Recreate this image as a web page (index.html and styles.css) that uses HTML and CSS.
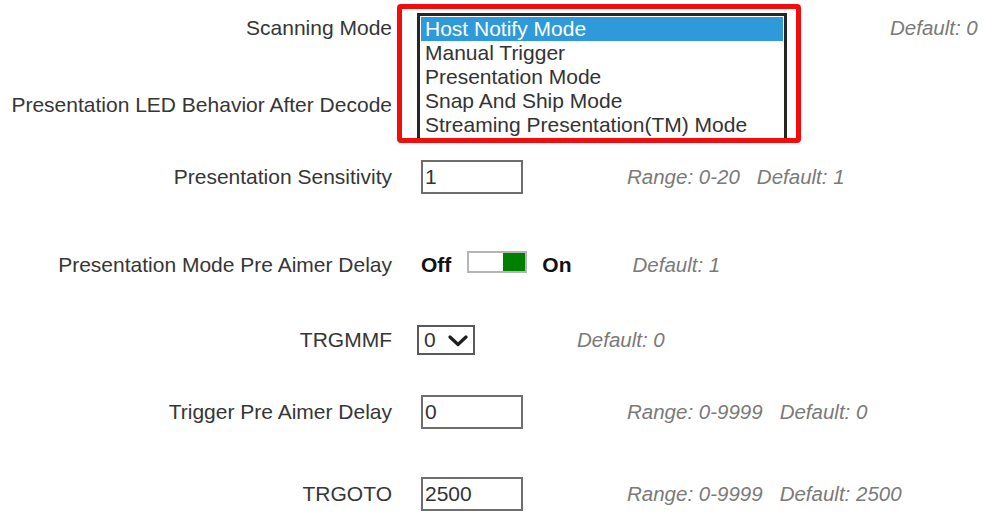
FILE: index.html
```html
<!DOCTYPE html>
<html>
<head>
<meta charset="utf-8">
<title>Scanning settings</title>
<link rel="stylesheet" href="styles.css">
</head>
<body>
<div class="form">
  <div class="row">
    <div class="label">Scanning Mode</div>
    <div class="ctrl ctrl-wide">
      <div class="select-closed"></div>
      <div class="listbox">
        <div class="opt selected">Host Notify Mode</div>
        <div class="opt">Manual Trigger</div>
        <div class="opt">Presentation Mode</div>
        <div class="opt">Snap And Ship Mode</div>
        <div class="opt">Streaming Presentation(TM) Mode</div>
      </div>
      <div class="highlight"></div>
    </div>
    <div class="note note-far">Default: 0</div>
  </div>

  <div class="row">
    <div class="label">Presentation LED Behavior After Decode</div>
    <div class="ctrl ctrl-wide"><div class="select-closed"></div></div>
  </div>

  <div class="row">
    <div class="label">Presentation Sensitivity</div>
    <div class="ctrl ctrl-input"><input class="text" type="text" value="1"></div>
    <div class="note note-input"><span>Range: 0-20</span><span class="def">Default: 1</span></div>
  </div>

  <div class="row">
    <div class="label">Presentation Mode Pre Aimer Delay</div>
    <div class="ctrl ctrl-input switch">
      <span class="sw-label">Off</span>
      <span class="toggle"><span class="knob"></span></span>
      <span class="sw-label">On</span>
    </div>
    <div class="note note-switch">Default: 1</div>
  </div>

  <div class="row">
    <div class="label">TRGMMF</div>
    <div class="ctrl ctrl-select">
      <div class="dropdown">
        <span class="dd-value">0</span>
        <svg class="chev" width="20" height="12" viewBox="0 0 20 12"><polyline points="2,2 10,9.5 18,2" fill="none" stroke="#1e1e1e" stroke-width="3.2" stroke-linecap="round" stroke-linejoin="round"/></svg>
      </div>
    </div>
    <div class="note note-select">Default: 0</div>
  </div>

  <div class="row">
    <div class="label">Trigger Pre Aimer Delay</div>
    <div class="ctrl ctrl-input"><input class="text" type="text" value="0"></div>
    <div class="note note-input"><span>Range: 0-9999</span><span class="def">Default: 0</span></div>
  </div>

  <div class="row">
    <div class="label">TRGOTO</div>
    <div class="ctrl ctrl-input"><input class="text" type="text" value="2500"></div>
    <div class="note note-input"><span>Range: 0-9999</span><span class="def">Default: 2500</span></div>
  </div>
</div>
</body>
</html>
```

FILE: styles.css
```css
html, body {
  margin: 0;
  padding: 0;
  background: #ffffff;
  overflow: hidden;
}

body {
  font-family: "Liberation Sans", Arial, sans-serif;
  font-size: 21px;
  color: #333333;
}

.form {
  display: grid;
  grid-template-rows: 77px 72px 88px 75px 72px 82px 40px;
  padding-top: 8px;
}

.row {
  display: flex;
  align-items: center;
  height: 40px;
}

.label {
  width: 392px;
  flex-shrink: 0;
  text-align: right;
  white-space: nowrap;
  color: #363636;
}

.ctrl {
  flex-shrink: 0;
  display: flex;
  align-items: center;
}

.ctrl-wide {
  position: relative;
  margin-left: 25px;
  width: 370px;
  height: 40px;
}

.ctrl-input {
  margin-left: 29px;
}

.ctrl-select {
  margin-left: 25px;
}

.select-closed {
  width: 100%;
  height: 30px;
  box-sizing: border-box;
  border: 2px solid #555555;
}

/* open dropdown list lying over the rows below */
.listbox {
  position: absolute;
  top: 5px;
  left: 0;
  width: 370px;
  height: 128px;
  box-sizing: border-box;
  border: 3px solid #262626;
  padding: 1px;
  background: #ffffff;
  z-index: 2;
}

.opt {
  height: 24px;
  line-height: 24px;
  padding: 0 4px;
  white-space: nowrap;
  color: #333333;
}

.opt.selected {
  background: #2e9ad9;
  color: #ffffff;
}

/* red annotation frame */
.highlight {
  position: absolute;
  top: -4px;
  left: -20px;
  width: 404px;
  height: 139px;
  box-sizing: border-box;
  border: 5px solid #f20c0c;
  border-radius: 4px;
  z-index: 3;
}

.text {
  width: 102px;
  height: 34px;
  box-sizing: border-box;
  border: 2px solid #6e6e6e;
  border-radius: 0;
  padding: 0 2px;
  margin: 0;
  font-family: "Liberation Sans", Arial, sans-serif;
  font-size: 21px;
  color: #333333;
  background: #ffffff;
  outline: none;
}

.switch {
  height: 40px;
}

.sw-label {
  font-weight: bold;
  color: #111111;
}

.toggle {
  display: flex;
  justify-content: flex-end;
  width: 60px;
  height: 22px;
  box-sizing: border-box;
  border: 2px solid #b5b5b5;
  margin: 0 15px 6px 16px;
  background: #ffffff;
}

.knob {
  width: 22px;
  background: #008000;
}

.dropdown {
  display: flex;
  align-items: center;
  width: 58px;
  height: 30px;
  box-sizing: border-box;
  border: 2px solid #5a5a5a;
  padding-left: 5px;
}

.dd-value {
  color: #333333;
}

.chev {
  margin-left: 12px;
  margin-top: 1px;
}

.note {
  font-style: italic;
  font-size: 20.5px;
  color: #7a7a7a;
  white-space: nowrap;
}

.note-far {
  margin-left: 103px;
}

.note-input {
  margin-left: 104px;
}

.note-switch {
  margin-left: 61px;
}

.note-select {
  margin-left: 102px;
}

.def {
  margin-left: 17px;
}
```
